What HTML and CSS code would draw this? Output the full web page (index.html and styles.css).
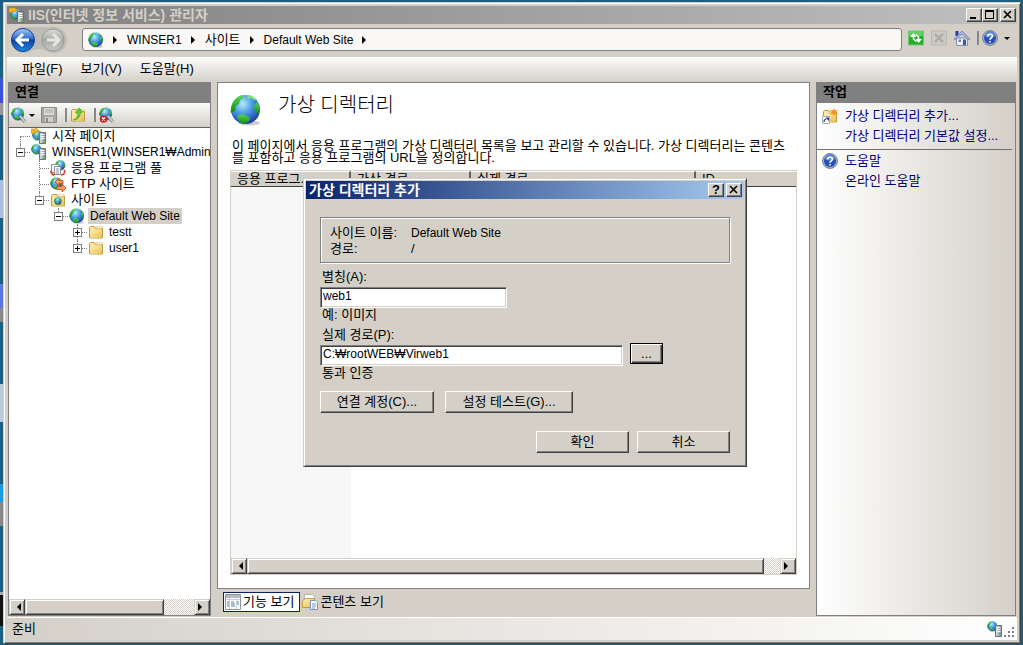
FILE: index.html
```html
<!DOCTYPE html>
<html lang="ko">
<head>
    <meta charset="UTF-8">
    <meta name="viewport" content="width=device-width, initial-scale=1.0">
    <title>IIS(인터넷 정보 서비스) 관리자</title>
    <link rel="stylesheet" href="styles.css">
</head>
<body>
    <!-- Icon library -->
    <svg class="icon-defs" width="0" height="0" aria-hidden="true">
        <defs>
            <radialGradient id="gSea" cx="0.4" cy="0.3" r="0.75">
                <stop offset="0" stop-color="#b5ecfd"/>
                <stop offset="0.45" stop-color="#4a9be6"/>
                <stop offset="1" stop-color="#1b3096"/>
            </radialGradient>
            <linearGradient id="gLand" x1="0" y1="0" x2="0" y2="1">
                <stop offset="0" stop-color="#58d84e"/>
                <stop offset="1" stop-color="#118a1c"/>
            </linearGradient>
            <linearGradient id="gFolder" x1="0" y1="0" x2="1" y2="1">
                <stop offset="0" stop-color="#fdf0b0"/>
                <stop offset="1" stop-color="#e6bc58"/>
            </linearGradient>
            <linearGradient id="gServer" x1="0" y1="0" x2="1" y2="0">
                <stop offset="0" stop-color="#e2e6ea"/>
                <stop offset="1" stop-color="#7c858e"/>
            </linearGradient>
            <linearGradient id="gBack" x1="0" y1="0" x2="0" y2="1">
                <stop offset="0" stop-color="#a9c9f5"/>
                <stop offset="0.45" stop-color="#2a68cc"/>
                <stop offset="0.5" stop-color="#0b3da0"/>
                <stop offset="1" stop-color="#1f8be6"/>
            </linearGradient>
            <linearGradient id="gForward" x1="0" y1="0" x2="0" y2="1">
                <stop offset="0" stop-color="#dcdcda"/>
                <stop offset="0.5" stop-color="#a9a9a7"/>
                <stop offset="1" stop-color="#c8c8c6"/>
            </linearGradient>
        </defs>
        <symbol id="globe" viewBox="0 0 32 32">
            <ellipse cx="19" cy="29" rx="11" ry="2.5" fill="#000" opacity="0.2"/>
            <circle cx="15.500" cy="15.500" r="14.500" fill="url(#gSea)"/>
            <path d="M2 11C4 5 8 2 12 1l1 3-3 2-1 4-3 2-1 5-4 2c-1-2 0-5 1-8z" fill="url(#gLand)"/>
            <path d="M17 1c4 0 8 2 10 5l-3 0-3-2-3 1z" fill="#7fe07a"/>
            <path d="M24 12l3-4c2 3 3 6 3 9l-2 3-3-2z" fill="url(#gLand)"/>
            <path d="M7 22l5-2 7 3 1 3-5 4c-4 0-7-3-8-8z" fill="url(#gLand)"/>
        </symbol>
        <symbol id="tower" viewBox="0 0 16 16">
            <path d="M8.500 4.500h6v11h-6z" fill="url(#gServer)" stroke="#6a727a"/>
            <path d="M10 6.500h3.500M10 8.500h3.500M10 10.500h3.500" stroke="#fff"/>
            <path d="M12 13h2v1.500h-2z" fill="#4fd321"/>
        </symbol>
        <symbol id="server" viewBox="0 0 16 16">
            <use href="#globe" x="0" y="0" width="11" height="11"/>
            <use href="#tower" width="16" height="16"/>
        </symbol>
        <symbol id="start" viewBox="0 0 16 16">
            <use href="#globe" x="1" y="2" width="11" height="11"/>
            <use href="#tower" width="16" height="16"/>
            <path d="M0 1h4l1-1 3 3-2 1-1 1-1-1-1 2-3-1z" fill="#f7b21b" stroke="#c07c0b" stroke-width="0.500"/>
        </symbol>
        <symbol id="folder" viewBox="0 0 16 16">
            <path d="M1.500 3.500l1-1h4l1 1.500h7v10h-13z" fill="url(#gFolder)" stroke="#c39a3c"/>
            <path d="M8.500 2.500h5v2h-5z" fill="#fff" stroke="#d5b35c" stroke-width="0.500"/>
            <path d="M2 6h12v8H2z" fill="url(#gFolder)"/>
        </symbol>
        <symbol id="sites" viewBox="0 0 16 16">
            <use href="#folder" width="16" height="16"/>
            <use href="#globe" x="4" y="5" width="8" height="8"/>
        </symbol>
        <symbol id="pool" viewBox="0 0 16 16">
            <use href="#globe" x="5" y="0" width="11" height="11"/>
            <path d="M1.500 4.500h7v8h-7z" fill="#fff" stroke="#8d8d98"/>
            <path d="M4.500 6.500h6v8h-6z" fill="#fff" stroke="#8d8d98"/>
            <path d="M6 9h3M6 11h3M6 13h3" stroke="#8d8d98"/>
            <path d="M0 11l3 4 2-1M15 10l-1 4-3 1" fill="none" stroke="#d33a2a" stroke-width="1.500"/>
        </symbol>
        <symbol id="ftp" viewBox="0 0 16 16">
            <use href="#globe" x="0" y="1" width="13" height="13"/>
            <path d="M5 6l4-4v2.500h4v3H9V10zM16 12l-4 4v-2.500H7v-3h5V8z" fill="#f79a5b" stroke="#c9410f" stroke-width="0.800"/>
        </symbol>
        <symbol id="connect" viewBox="0 0 16 16">
            <use href="#globe" x="0" y="0" width="14" height="14"/>
            <path d="M9 9l5 6" stroke="#6f8494" stroke-width="3"/>
            <path d="M9 9l5 6" stroke="#cfdbe4" stroke-width="1.500"/>
        </symbol>
        <symbol id="disconnect" viewBox="0 0 16 16">
            <use href="#connect" width="16" height="16"/>
            <circle cx="4.500" cy="12" r="3.800" fill="#d22323"/>
            <path d="M3 10.500l3 3M6 10.500l-3 3" stroke="#fff" stroke-width="1.300"/>
        </symbol>
        <symbol id="save" viewBox="0 0 16 16">
            <path d="M.500.500h15v15H.500z" fill="#a6a6a2" stroke="#8a8a88"/>
            <path d="M3 1h10v7H3z" fill="#dcdad5"/>
            <path d="M4 3h8M4 5h8" stroke="#a6a6a2"/>
            <path d="M4 10h8v5H4z" fill="#d0cec9"/>
            <path d="M5 11h2v4H5z" fill="#8a8a88"/>
        </symbol>
        <symbol id="up" viewBox="0 0 16 16">
            <use href="#folder" width="16" height="16"/>
            <path d="M3 13c4-1 5-4 5-7H5.500L9 1l4 4-2.500.500C10 10 8 13 3 13z" fill="#5fd02c" stroke="#3a9417" stroke-width="0.600"/>
        </symbol>
        <symbol id="newdir" viewBox="0 0 16 16">
            <use href="#folder" width="16" height="16"/>
            <path d="M12 0l1 2.500L16 2l-2 2 2 2.500-3-.500-1 2.500-1-2.500-3 .500 2-2.500-2-2 3 .500z" fill="#f6931c"/>
            <path d="M.500 8.500h7v7h-7z" fill="#fff" stroke="#a8acc0"/>
            <path d="M2 14c0-2 1-3 2.500-3" fill="none" stroke="#26329b" stroke-width="1.200"/>
            <path d="M3.500 9.500H7V13z" fill="#26329b"/>
        </symbol>
        <symbol id="help" viewBox="0 0 16 16">
            <circle cx="8" cy="8" r="7.500" fill="#a9b0bd" stroke="#7d8490"/>
            <circle cx="8" cy="8" r="6" fill="#2450b8"/>
            <path d="M3 6a5 5 0 0 1 10 0c-3 2-7 2-10 0z" fill="#5c87d8"/>
            <path d="M5.500 6.500C5.500 3.500 10.500 3.500 10.500 6c0 1.800-2.500 1.800-2.500 3.800M8 11v1.500" fill="none" stroke="#fff" stroke-width="1.600"/>
        </symbol>
        <symbol id="refresh" viewBox="0 0 16 16">
            <path d="M.500 1h15v14H.500z" fill="#22b028" stroke="#7cc07c"/>
            <path d="M1 1h14v5H1z" fill="#62d060"/>
            <path d="M5.500 4v5l3 2.500M10.500 12V7L8 4.500" fill="none" stroke="#fff" stroke-width="1.600"/>
            <path d="M2 7l3.500-4L8 7zM14 9l-3.500 4L8 9z" fill="#fff"/>
        </symbol>
        <symbol id="stop" viewBox="0 0 16 16">
            <path d="M.500 1h15v14H.500z" fill="#cbc9c4" stroke="#bab8b3"/>
            <path d="M4 4l8 8M12 4l-8 8" stroke="#a9a7a3" stroke-width="2"/>
        </symbol>
        <symbol id="home" viewBox="0 0 16 16">
            <path d="M2.500 8h11v7.500h-11z" fill="#eceef6" stroke="#8c90a8"/>
            <path d="M1.500 1h3v5h-3z" fill="#2b3da8"/>
            <path d="M0 9l8-8 8 8-1 1-7-6-7 6z" fill="#a9b8e4" stroke="#5566b0" stroke-width="0.600"/>
            <path d="M9 9.500h3V15H9z" fill="#2b5fa8"/>
            <path d="M4.500 9.500h2.500v2.500h-2.500z" fill="#7187a8"/>
        </symbol>
        <symbol id="features" viewBox="0 0 16 16">
            <path d="M.500.500h15v15H.500z" fill="#fff" stroke="#8c93a3"/>
            <path d="M1 1h14v3H1z" fill="#b6bbc7"/>
            <path d="M1 5.500h14M4.500 4v11M11.500 4v11" stroke="#c9cdd6"/>
            <path d="M2 8h2M2 10h2M2 12h2M6 8h3M6 10h4M6 12h4M12 8h2M12 10h2" stroke="#5c7d92"/>
        </symbol>
        <symbol id="content" viewBox="0 0 16 16">
            <path d="M2.500.500h8l2 2v7h-10z" fill="#fff" stroke="#b5b5a8"/>
            <path d="M.500 6.500l3-2h9v9h-12z" fill="url(#gFolder)" stroke="#c39a3c"/>
            <path d="M8.500 6.500h5l2 2v7h-7z" fill="#fff" stroke="#7a93c4"/>
            <path d="M10 10h4M10 12h4M10 14h3" stroke="#7a93c4"/>
        </symbol>
    </svg>

    <div class="window">
        <header class="title-bar">
            <svg class="icon"><use href="#start"/></svg>
            <h1>IIS(인터넷 정보 서비스) 관리자</h1>
            <button class="caption-btn" aria-label="최소화"><svg viewBox="0 0 12 10"><path d="M2 7h6v2H2z"/></svg></button>
            <button class="caption-btn" aria-label="최대화"><svg viewBox="0 0 12 10"><path d="M1 0h9v9H1zM2 2v6h7V2z" fill-rule="evenodd"/></svg></button>
            <button class="caption-btn close" aria-label="닫기"><svg viewBox="0 0 12 10"><path d="M2 1l7 7M9 1L2 8" stroke="#000" stroke-width="1.600"/></svg></button>
        </header>

        <nav class="nav-bar">
            <svg class="history" width="58" height="30" viewBox="0 0 58 30">
                <path d="M14 2h30a13 13 0 0 1 0 26c-6 0-8-4-15-4s-9 4-15 4a13 13 0 0 1 0-26z" fill="#bdbbb6"/>
                <circle cx="13" cy="15" r="11.500" fill="url(#gBack)" stroke="#17408f"/>
                <path d="M19 15H8M13 9l-6 6 6 6" fill="none" stroke="#fff" stroke-width="3"/>
                <circle cx="43" cy="15" r="11" fill="url(#gForward)" stroke="#999"/>
                <path d="M37 15h11M43 9l6 6-6 6" fill="none" stroke="#e4e4e2" stroke-width="3"/>
            </svg>
            <div class="address">
                <svg class="icon"><use href="#globe"/></svg>
                <i class="crumb-arrow"></i><a href="#" class="latin">WINSER1</a>
                <i class="crumb-arrow"></i><a href="#">사이트</a>
                <i class="crumb-arrow"></i><a href="#" class="latin">Default Web Site</a>
                <i class="crumb-arrow"></i>
            </div>
            <div class="nav-tools">
                <button class="tool" aria-label="새로 고침"><svg class="icon"><use href="#refresh"/></svg></button>
                <button class="tool" aria-label="중지"><svg class="icon"><use href="#stop"/></svg></button>
                <button class="tool" aria-label="홈"><svg class="icon"><use href="#home"/></svg></button>
                <span class="divider"></span>
                <button class="tool" aria-label="도움말"><svg class="icon"><use href="#help"/></svg><i class="caret"></i></button>
            </div>
        </nav>

        <div class="menu-bar">
            <button>파일(F)</button>
            <button>보기(V)</button>
            <button>도움말(H)</button>
        </div>

        <main class="workspace">
            <section class="panel connections">
                <h2>연결</h2>
                <div class="toolbar">
                    <button class="tool" aria-label="연결 만들기"><svg class="icon"><use href="#connect"/></svg><i class="caret"></i></button>
                    <button class="tool" aria-label="저장"><svg class="icon"><use href="#save"/></svg></button>
                    <span class="divider"></span>
                    <button class="tool" aria-label="위로"><svg class="icon"><use href="#up"/></svg></button>
                    <span class="divider"></span>
                    <button class="tool" aria-label="연결 끊기"><svg class="icon"><use href="#disconnect"/></svg></button>
                </div>
                <ul class="tree">
                    <li><div class="node"><svg class="icon"><use href="#start"/></svg><span>시작 페이지</span></div></li>
                    <li>
                        <div class="node"><i class="toggle open"></i><svg class="icon"><use href="#server"/></svg><span class="latin">WINSER1(WINSER1₩Admini</span></div>
                        <ul>
                            <li><div class="node"><svg class="icon"><use href="#pool"/></svg><span>응용 프로그램 풀</span></div></li>
                            <li><div class="node"><svg class="icon"><use href="#ftp"/></svg><span>FTP 사이트</span></div></li>
                            <li>
                                <div class="node"><i class="toggle open"></i><svg class="icon"><use href="#sites"/></svg><span>사이트</span></div>
                                <ul>
                                    <li>
                                        <div class="node"><i class="toggle open"></i><svg class="icon"><use href="#globe"/></svg><span class="latin selected">Default Web Site</span></div>
                                        <ul>
                                            <li><div class="node"><i class="toggle"></i><svg class="icon"><use href="#folder"/></svg><span class="latin">testt</span></div></li>
                                            <li><div class="node"><i class="toggle"></i><svg class="icon"><use href="#folder"/></svg><span class="latin">user1</span></div></li>
                                        </ul>
                                    </li>
                                </ul>
                            </li>
                        </ul>
                    </li>
                </ul>
                <div class="scrollbar">
                    <button class="left" aria-label="왼쪽"></button>
                    <div class="track"><div class="thumb"></div></div>
                    <button class="right" aria-label="오른쪽"></button>
                </div>
            </section>

            <section class="center">
                <div class="feature">
                    <div class="feature-head">
                        <svg width="32" height="32"><use href="#globe"/></svg>
                        <h2>가상 디렉터리</h2>
                    </div>
                    <p>이 페이지에서 응용 프로그램의 가상 디렉터리 목록을 보고 관리할 수 있습니다. 가상 디렉터리는 콘텐츠를 포함하고 응용 프로그램의 URL을 정의합니다.</p>
                    <div class="list">
                        <table>
                            <colgroup><col class="sorted"><col class="virtual"><col class="physical"><col></colgroup>
                            <thead>
                                <tr><th>응용 프로그...<i class="sort"></i></th><th>가상 경로</th><th>실제 경로</th><th>ID</th></tr>
                            </thead>
                            <tbody>
                                <tr><td></td><td></td><td></td><td></td></tr>
                            </tbody>
                        </table>
                        <div class="scrollbar wide">
                            <button class="left" aria-label="왼쪽"></button>
                            <div class="track"><div class="thumb"></div></div>
                            <button class="right" aria-label="오른쪽"></button>
                        </div>
                    </div>
                </div>
                <div class="view-tabs">
                    <button class="active"><svg class="icon"><use href="#features"/></svg>기능 보기</button>
                    <button><svg class="icon"><use href="#content"/></svg>콘텐츠 보기</button>
                </div>
            </section>

            <aside class="panel actions">
                <h2>작업</h2>
                <ul>
                    <li><svg class="icon"><use href="#newdir"/></svg><a href="#">가상 디렉터리 추가...</a></li>
                    <li><a href="#">가상 디렉터리 기본값 설정...</a></li>
                </ul>
                <hr>
                <ul>
                    <li><svg class="icon"><use href="#help"/></svg><a href="#">도움말</a></li>
                    <li><a href="#">온라인 도움말</a></li>
                </ul>
            </aside>
        </main>

        <footer class="status-bar">
            <span>준비</span>
            <svg class="icon"><use href="#server"/></svg>
            <svg class="grip" width="12" height="12" viewBox="0 0 12 12"><path d="M9 1h2v2H9zM5 5h2v2H5zM9 5h2v2H9zM1 9h2v2H1zM5 9h2v2H5zM9 9h2v2H9z" fill="#808080"/></svg>
        </footer>
    </div>

    <!-- Add virtual directory -->
    <form class="dialog" role="dialog" aria-labelledby="dialogTitle">
        <div class="dialog-title">
            <h2 id="dialogTitle">가상 디렉터리 추가</h2>
            <button type="button" class="caption-btn">?</button>
            <button type="button" class="caption-btn close" aria-label="닫기"><svg viewBox="0 0 12 10"><path d="M2 1l7 7M9 1L2 8" stroke="#000" stroke-width="1.600"/></svg></button>
        </div>
        <div class="dialog-body">
            <dl class="site-info">
                <dt>사이트 이름:</dt><dd class="latin">Default Web Site</dd>
                <dt>경로:</dt><dd>/</dd>
            </dl>
            <label for="alias">별칭(A):</label>
            <input type="text" id="alias" class="alias" value="web1">
            <div class="hint">예: 이미지</div>
            <label for="path">실제 경로(P):</label>
            <div class="path-row">
                <input type="text" id="path" value="C:₩rootWEB₩Virweb1">
                <button type="button" class="btn browse">...</button>
            </div>
            <div class="hint">통과 인증</div>
            <div class="button-row">
                <button type="button" class="btn account">연결 계정(C)...</button>
                <button type="button" class="btn test">설정 테스트(G)...</button>
            </div>
            <div class="button-row confirm">
                <button type="submit" class="btn">확인</button>
                <button type="button" class="btn">취소</button>
            </div>
        </div>
    </form>
</body>
</html>
```
FILE: styles.css
```css
* {
    box-sizing: border-box;
}
body {
    margin: 0;
    padding: 2px 2px 1px 3px;
    height: 100vh;
    overflow: hidden;
    background: #1d5f7f;
    font-family: "Liberation Sans", "Noto Sans CJK KR", sans-serif;
    font-size: 13px;
    line-height: 16px;
    color: #000;
}
/* edges of the desktop icons behind the window */
body::before {
    content: "";
    position: absolute;
    left: 0;
    top: 0;
    width: 3px;
    height: 100%;
    background: linear-gradient(#1d5f7f 78px, #3c50d8 78px 103px, #999 103px 115px, #1d5f7f 115px 180px, #a9bfe0 180px 218px, #1d5f7f 218px 284px, #5a78e0 284px 308px, #888 308px 322px, #1d5f7f 322px 384px, #b8cbdc 384px 422px, #1d5f7f 422px 484px, #1a9be8 484px 502px, #888 502px 526px, #1d5f7f 526px 592px, #aaa 592px 595px, #111 595px 626px, #1d5f7f 626px);
}
h1,
h2,
p,
ul,
dl,
dd {
    margin: 0;
    padding: 0;
}
ul {
    list-style: none;
}
button,
input {
    font: inherit;
    color: inherit;
    border-radius: 0;
}
button {
    padding: 0;
    border: none;
    background: none;
}
a {
    color: inherit;
    text-decoration: none;
}
svg {
    display: block;
    flex: none;
}
.icon-defs {
    position: absolute;
}
.icon {
    width: 16px;
    height: 16px;
}
.latin {
    font-size: 12px;
}
.caret {
    border: 3px solid transparent;
    border-top-color: #000;
    border-bottom: none;
}
.divider {
    width: 2px;
    height: 14px;
    background: #8a8884;
}
.tool {
    display: flex;
    align-items: center;
}

/* Window frame */
.window {
    display: flex;
    flex-direction: column;
    height: 100%;
    padding: 3px;
    background: #d4d0c8;
    border: 1px solid;
    border-color: #d4d0c8 #404040 #404040 #d4d0c8;
    box-shadow: inset 1px 1px #fff, inset -1px -1px #808080;
}
.title-bar {
    display: flex;
    align-items: center;
    height: 18px;
    padding: 0 1px 0 2px;
    background: linear-gradient(90deg, #808080, #c0c0c0);
}
.title-bar h1 {
    flex: 1;
    margin-left: 3px;
    font-size: 14px;
    color: #d4d0c8;
}
.caption-btn {
    display: flex;
    align-items: center;
    justify-content: center;
    width: 16px;
    height: 14px;
    background: #d4d0c8;
    border: 1px solid;
    border-color: #fff #404040 #404040 #fff;
    box-shadow: inset -1px -1px #808080;
    font-weight: bold;
    line-height: 12px;
}
.caption-btn svg {
    width: 12px;
    height: 10px;
}
.caption-btn.close {
    margin-left: 2px;
}

/* Navigation */
.nav-bar {
    display: flex;
    height: 33px;
    padding-left: 3px;
}
.history {
    margin-top: 1px;
}
.address {
    display: flex;
    align-items: center;
    flex: 1;
    height: 23px;
    margin: 4px 0 0 14px;
    padding-left: 5px;
    background: #f9f8f6;
    border: 1px solid #808088;
    border-radius: 3px;
}
.crumb-arrow {
    margin: 0 10px 0 9px;
    border: 4px solid transparent;
    border-left-color: #000;
    border-right: none;
}
.nav-tools {
    display: flex;
    align-items: center;
    gap: 7px;
    height: 28px;
    padding: 0 7px 0 6px;
}
.nav-tools .divider + .tool {
    margin-left: -4px;
}
.nav-tools .caret {
    margin-left: 6px;
}
.menu-bar {
    display: flex;
    gap: 18px;
    height: 25px;
    padding: 0 15px 2px;
    background: linear-gradient(#fcfcfb, #d4d0c8);
}

/* Panels */
.workspace {
    display: flex;
    flex: 1;
    gap: 6px;
    min-height: 0;
    padding: 0 1px 1px;
}
.panel {
    display: flex;
    flex-direction: column;
    border: 1px solid #808080;
    border-top: none;
    background: #fff;
}
.panel h2 {
    height: 21px;
    padding-left: 6px;
    background: #808080;
    font-size: 13px;
    line-height: 20px;
}
.connections {
    width: 203px;
}
.toolbar {
    display: flex;
    align-items: center;
    height: 25px;
    padding-left: 2px;
    background: linear-gradient(#fafaf9, #d4d0c8);
    border-bottom: 1px solid #606060;
}
.toolbar .caret {
    margin: 0 6px 0 2px;
}
.toolbar .divider {
    margin: 0 3px 0 8px;
}

/* Tree */
.tree {
    flex: 1;
    min-height: 0;
    padding-left: 2px;
    overflow: hidden;
    white-space: nowrap;
}
.tree ul {
    padding-left: 19px;
}
.tree li {
    position: relative;
}
.tree li::before {
    content: "";
    position: absolute;
    left: 9px;
    top: 0;
    height: 100%;
    border-left: 1px dotted #808080;
}
.tree li:last-child::before {
    height: 8px;
}
.tree > li:first-child::before {
    top: 8px;
    height: 50%;
}
.node {
    display: flex;
    align-items: center;
    height: 16px;
    padding-left: 20px;
}
.node::before {
    content: "";
    position: absolute;
    left: 10px;
    top: 8px;
    width: 9px;
    border-top: 1px dotted #808080;
}
.node span {
    margin-left: 3px;
    padding-left: 2px;
}
.node .selected {
    padding-right: 2px;
    background: #d4d0c8;
}
.toggle {
    position: absolute;
    left: 5px;
    top: 4px;
    width: 9px;
    height: 9px;
    border: 1px solid #808080;
    background: linear-gradient(#000, #000) center / 5px 1px no-repeat, linear-gradient(#000, #000) center / 1px 5px no-repeat, #fff;
}
.toggle.open {
    background: linear-gradient(#000, #000) center / 5px 1px no-repeat, #fff;
}

/* Scroll bars */
.scrollbar {
    display: flex;
    height: 16px;
}
.scrollbar button,
.thumb {
    width: 16px;
    height: 16px;
    background: #d4d0c8;
    border: 1px solid;
    border-color: #d4d0c8 #404040 #404040 #d4d0c8;
    box-shadow: inset 1px 1px #fff, inset -1px -1px #808080;
}
.scrollbar button::before {
    content: "";
    display: block;
    width: 4px;
    margin: 0 auto;
    border: 4px solid transparent;
    border-right-color: #000;
    border-left: none;
}
.scrollbar .right::before {
    border: 4px solid transparent;
    border-left-color: #000;
    border-right: none;
}
.track {
    flex: 1;
    background: repeating-conic-gradient(#fff 0 25%, #d4d0c8 0 50%) 0 0 / 2px 2px;
}
.thumb {
    width: 82%;
}
.wide .thumb {
    width: 97%;
}

/* Feature page */
.center {
    display: flex;
    flex-direction: column;
    flex: 1;
    min-width: 0;
}
.feature {
    display: flex;
    flex-direction: column;
    flex: 1;
    min-height: 0;
    padding: 11px 12px 13px;
    background: #fff;
    border: 1px solid #808080;
}
.feature-head {
    display: flex;
    gap: 16px;
    height: 46px;
}
.feature-head h2 {
    font-size: 20px;
    font-weight: 300;
    line-height: 22px;
}
.feature p {
    height: 30px;
    padding: 0 4px 0 2px;
    line-height: 12px;
}
.list {
    display: flex;
    flex-direction: column;
    flex: 1;
    min-height: 0;
    border: 1px solid #d4d0c8;
}
.list table {
    flex: 1;
    width: 100%;
    height: 100%;
    table-layout: fixed;
    border-collapse: separate;
    border-spacing: 0;
}
.sorted {
    width: 120px;
    background: #f7f7f7;
}
.virtual {
    width: 120px;
}
.physical {
    width: 225px;
}
.list th {
    height: 16px;
    padding: 0 6px;
    overflow: hidden;
    background: #d4d0c8;
    border-top: 1px solid #fff;
    border-right: 2px solid #606060;
    border-bottom: 1px solid #404040;
    font-weight: normal;
    line-height: 14px;
    text-align: left;
    white-space: nowrap;
}
.list th:last-child {
    border-right: none;
}
.sort {
    display: inline-block;
    margin-left: 16px;
    border: 4px solid transparent;
    border-bottom-color: #808080;
    border-top: none;
}
.view-tabs {
    display: flex;
    gap: 2px;
    padding: 3px 6px 4px;
}
.view-tabs button {
    display: flex;
    align-items: center;
    gap: 2px;
    height: 20px;
}
.view-tabs .active {
    padding: 0 5px 0 1px;
    background: #fff;
    border: 1px solid #0a246a;
}

/* Actions */
.actions {
    width: 200px;
    background: linear-gradient(90deg, #fff, #d4d0c8);
}
.actions ul {
    padding: 3px 0 3px 5px;
}
.actions li {
    display: flex;
    align-items: center;
    height: 20px;
    padding-left: 23px;
    color: #000080;
    white-space: nowrap;
}
.actions .icon {
    margin: 0 7px 0 -23px;
}
.actions hr {
    align-self: stretch;
    height: 1px;
    margin: 0 3px -2px 0;
    border: none;
    background: #707070;
}

.status-bar {
    display: flex;
    align-items: center;
    height: 23px;
    padding: 0 2px 0 5px;
    background: linear-gradient(90deg, #d4d0c8, #fff);
    border-top: 1px solid #fff;
}
.status-bar span {
    flex: 1;
}
.grip {
    align-self: flex-end;
    margin-bottom: 2px;
}

/* Dialog */
.dialog {
    position: absolute;
    left: 303px;
    top: 178px;
    width: 444px;
    padding: 2px;
    background: #d4d0c8;
    border: 1px solid;
    border-color: #d4d0c8 #404040 #404040 #d4d0c8;
    box-shadow: inset 1px 1px #fff, inset -1px -1px #808080;
}
.dialog-title {
    display: flex;
    align-items: center;
    height: 18px;
    padding: 0 2px 0 3px;
    background: linear-gradient(90deg, #0a246a, #a6caf0);
    color: #fff;
}
.dialog-title h2 {
    flex: 1;
    font-size: 14px;
}
.dialog-title .caption-btn {
    color: #000;
}
.dialog-body {
    display: flex;
    flex-direction: column;
    padding: 18px 14px 11px;
}
.site-info {
    display: grid;
    grid-template-columns: 81px 1fr;
    padding: 7px 9px 5px;
    margin-bottom: 6px;
    border: 1px solid #808080;
    box-shadow: inset 1px 1px #fff, 1px 1px #fff;
}
.dialog label {
    height: 18px;
    padding-left: 2px;
}
.dialog input {
    height: 21px;
    padding: 0 2px 3px;
    background: #fff;
    border: 1px solid;
    border-color: #808080 #fff #fff #808080;
    box-shadow: inset 1px 1px #404040, inset -1px -1px #d4d0c8;
    outline: none;
    font-size: 12px;
}
.dialog .alias {
    width: 187px;
}
.hint {
    height: 19px;
    padding-left: 2px;
    line-height: 14px;
}
.path-row {
    display: flex;
    gap: 7px;
}
.path-row input {
    width: 303px;
}
.btn {
    height: 22px;
    background: #d4d0c8;
    border: 1px solid;
    border-color: #fff #404040 #404040 #fff;
    box-shadow: inset -1px -1px #808080;
}
.browse {
    width: 33px;
    height: 21px;
    margin-top: -2px;
    border-color: #000;
    box-shadow: inset 1px 1px #fff, inset -1px -1px #404040, inset -2px -2px #808080;
}
.button-row {
    display: flex;
    gap: 11px;
    margin-top: 6px;
}
.account {
    width: 114px;
}
.test {
    width: 128px;
}
.confirm {
    justify-content: flex-end;
    gap: 8px;
    margin-top: 18px;
}
.confirm .btn {
    width: 93px;
}
```
